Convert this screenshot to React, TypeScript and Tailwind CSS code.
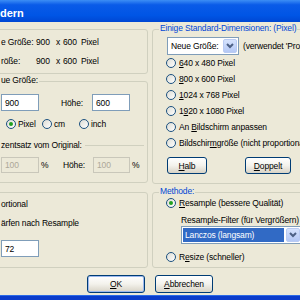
import type { ReactNode } from "react";
import clsx from "clsx";

interface GroupProps {
  label?: string;
  blue?: boolean;
  className?: string;
  children?: ReactNode;
}

/**
 * XP-style group box: thin rounded border with the caption sitting on the top edge.
 */
function Group({ label, blue, className, children }: GroupProps) {
  return (
    <div className={clsx("relative shrink-0 rounded-[3px] border border-[#D0D0BF]", className)}>
      {label && (
        <span
          className={clsx(
            "absolute -top-[7px] whitespace-nowrap bg-[#ECE9D8] px-[1px] leading-[11px]",
            blue ? "left-[6px] text-[#0046D5]" : "left-[5px] text-black",
          )}
        >
          {label}
        </span>
      )}
      {children}
    </div>
  );
}

function Radio({ checked = false }: { checked?: boolean }) {
  return (
    <span className="flex h-[10px] w-[10px] shrink-0 items-center justify-center rounded-full border border-[#1C5180] bg-linear-to-br from-[#DCDCD4] to-white">
      {checked && <span className="h-[4px] w-[4px] rounded-full bg-[#21A121]" />}
    </span>
  );
}

function Field({ value, disabled, className }: { value: string; disabled?: boolean; className?: string }) {
  return (
    <div
      className={clsx(
        "flex shrink-0 items-center border pl-[3px]",
        disabled ? "border-[#C9C7BA] bg-[#ECE9D8] text-[#ACA899]" : "border-[#7F9DB9] bg-white text-black",
        className,
      )}
    >
      {value}
    </div>
  );
}

function Chevron() {
  return (
    <svg width="8" height="6" viewBox="0 0 8 6">
      <polyline points="1,1 4,4 7,1" fill="none" stroke="#4D6185" strokeWidth="2" />
    </svg>
  );
}

function ComboButton() {
  return (
    <span className="flex h-[14px] w-[14px] shrink-0 items-center justify-center rounded-[2px] border border-[#B9CBF3] bg-linear-to-b from-[#D6E3FD] to-[#B4C8F5]">
      <Chevron />
    </span>
  );
}

function XpButton({ children, isDefault, className }: { children: ReactNode; isDefault?: boolean; className?: string }) {
  return (
    <div
      className={clsx(
        "flex h-[18px] shrink-0 items-center justify-center rounded-[3px] border border-[#003C74] bg-linear-to-b from-white via-[#F3F2EC] to-[#D8D3C6]",
        isDefault && "shadow-[inset_0_0_0_1px_#9CB8EE]",
        className,
      )}
    >
      {children}
    </div>
  );
}

function RadioRow({ checked, children }: { checked?: boolean; children: ReactNode }) {
  return (
    <div className="flex h-[16px] items-center gap-[3px] whitespace-nowrap pl-[13px]">
      <Radio checked={checked} />
      <span>{children}</span>
    </div>
  );
}

export default function App() {
  return (
    <div className="flex h-[300px] w-[300px] flex-col overflow-hidden bg-[#ECE9D8] font-['Liberation_Sans',Arial,sans-serif] text-[8.5px] leading-[10px] tracking-[-0.15px] text-black">
      {/* Title bar */}
      <div className="h-[22px] shrink-0 bg-[linear-gradient(180deg,#3C8EF5_0%,#0A5BE8_22%,#0055E5_70%,#0047D3_100%)] pt-[5px] text-[11px] font-bold leading-[17px] tracking-normal text-white">
        dern
      </div>

      <div className="flex flex-1 flex-col">
        <div className="flex">
          {/* Left column */}
          <div className="-ml-[6px] flex w-[154px] shrink-0 flex-col pt-[7px]">
            <Group className="h-[45px]">
              <div className="flex flex-col gap-[9px] pl-[6px] pt-[7px]">
                <div className="flex h-[10px] items-center whitespace-nowrap">
                  <span className="w-[35px]">e Größe:</span>
                  <span className="w-[20px]">900</span>
                  <span className="w-[7px]">x</span>
                  <span className="w-[18px]">600</span>
                  <span>Pixel</span>
                </div>
                <div className="flex h-[10px] items-center whitespace-nowrap">
                  <span className="w-[35px]">röße:</span>
                  <span className="w-[20px]">900</span>
                  <span className="w-[7px]">x</span>
                  <span className="w-[18px]">600</span>
                  <span>Pixel</span>
                </div>
              </div>
            </Group>

            <Group label="ue Größe:" className="mt-[7px] h-[102px]">
              <div className="flex flex-col pl-[6px] pt-[12px]">
                <div className="flex h-[17px] items-center">
                  <Field value="900" className="h-[17px] w-[38px]" />
                  <span className="ml-[22px] w-[31px]">Höhe:</span>
                  <Field value="600" className="h-[17px] w-[38px]" />
                </div>
                <div className="mt-[7px] flex h-[12px] items-center whitespace-nowrap">
                  <span className="ml-[5px]">
                    <Radio checked />
                  </span>
                  <span className="ml-[2px] w-[24px]">Pixel</span>
                  <Radio />
                  <span className="ml-[2px] w-[25px]">cm</span>
                  <Radio />
                  <span className="ml-[2px]">inch</span>
                </div>
                <div className="mt-[10px] flex h-[10px] items-center whitespace-nowrap">
                  <span>zentsatz vom Original:</span>
                  <span className="ml-[3px] mr-[3px] h-0 flex-1 border-t border-[#D0D0BF]" />
                </div>
                <div className="mt-[7px] flex h-[16px] items-center">
                  <Field value="100" disabled className="h-[16px] w-[38px]" />
                  <span className="ml-[2px] w-[22px]">%</span>
                  <span className="w-[30px]">Höhe:</span>
                  <Field value="100" disabled className="h-[16px] w-[37px]" />
                  <span className="ml-[2px]">%</span>
                </div>
              </div>
            </Group>

            <Group className="mt-[9px] h-[76px]">
              <div className="flex flex-col pl-[6px] pt-[6px]">
                <div className="flex h-[10px] items-center whitespace-nowrap">ortional</div>
                <div className="mt-[9px] flex h-[10px] items-center whitespace-nowrap">ärfen nach Resample</div>
                <Field value="72" className="mt-[12px] h-[17px] w-[38px]" />
              </div>
            </Group>
          </div>

          {/* Right column */}
          <div className="ml-[4px] flex w-[160px] shrink-0 flex-col pt-[7px]">
            <Group label="Einige Standard-Dimensionen: (Pixel)" blue className="h-[155px]">
              <div className="flex flex-col pt-[7px]">
                <div className="flex h-[18px] items-center whitespace-nowrap">
                  <div className="ml-[14px] flex h-[18px] w-[72px] shrink-0 items-center justify-between border border-[#7F9DB9] bg-white pl-[3px] pr-[1px]">
                    <span>Neue Größe:</span>
                    <ComboButton />
                  </div>
                  <span className="ml-[4px]">(verwendet 'Proportional')</span>
                </div>
                <RadioRow>
                  <span className="underline">6</span>40 x 480 Pixel
                </RadioRow>
                <RadioRow>
                  <span className="underline">8</span>00 x 600 Pixel
                </RadioRow>
                <RadioRow>
                  <span className="underline">1</span>024 x 768 Pixel
                </RadioRow>
                <RadioRow>
                  1<span className="underline">9</span>20 x 1080 Pixel
                </RadioRow>
                <RadioRow>
                  An <span className="underline">B</span>ildschirm anpassen
                </RadioRow>
                <RadioRow>
                  Bildschir<span className="underline">m</span>größe (nicht proportional)
                </RadioRow>
                <div className="mt-[6px] flex">
                  <XpButton className="ml-[14px] !h-[17px] w-[40px]">
                    <span>
                      <span className="underline">H</span>alb
                    </span>
                  </XpButton>
                  <XpButton className="ml-[38px] !h-[17px] w-[46px]">
                    <span>
                      <span className="underline">D</span>oppelt
                    </span>
                  </XpButton>
                </div>
              </div>
            </Group>

            <Group label="Methode:" blue className="mt-[8px] h-[76px]">
              <div className="flex flex-col pt-[2px]">
                <RadioRow checked>
                  <span className="underline">R</span>esample (bessere Qualität)
                </RadioRow>
                <div className="mt-[4px] flex h-[10px] items-center whitespace-nowrap pl-[28px]">
                  Resample-Filter (für Vergrößern)
                </div>
                <div className="ml-[28px] mt-[1px] flex h-[18px] w-[121px] items-center border border-[#7F9DB9] bg-white pl-[1px] pr-[1px]">
                  <span className="flex h-[14px] flex-1 items-center bg-[#316AC5] pl-[2px] text-white">
                    Lanczos (langsam)
                  </span>
                  <span className="ml-[2px]">
                    <ComboButton />
                  </span>
                </div>
                <div className="mt-[5px]">
                  <RadioRow>
                    R<span className="underline">e</span>size (schneller)
                  </RadioRow>
                </div>
              </div>
            </Group>
          </div>
        </div>

        {/* Dialog buttons */}
        <div className="mt-[7px] flex pl-[87px]">
          <XpButton isDefault className="w-[58px]">
            <span>
              <span className="underline">O</span>K
            </span>
          </XpButton>
          <XpButton className="ml-[10px] w-[58px]">
            <span>
              <span className="underline">A</span>bbrechen
            </span>
          </XpButton>
        </div>
      </div>

      {/* Window bottom frame */}
      <div className="h-[5px] shrink-0 border-t border-[#2A6AE8] bg-[#0A3CCB]" />
    </div>
  );
}
